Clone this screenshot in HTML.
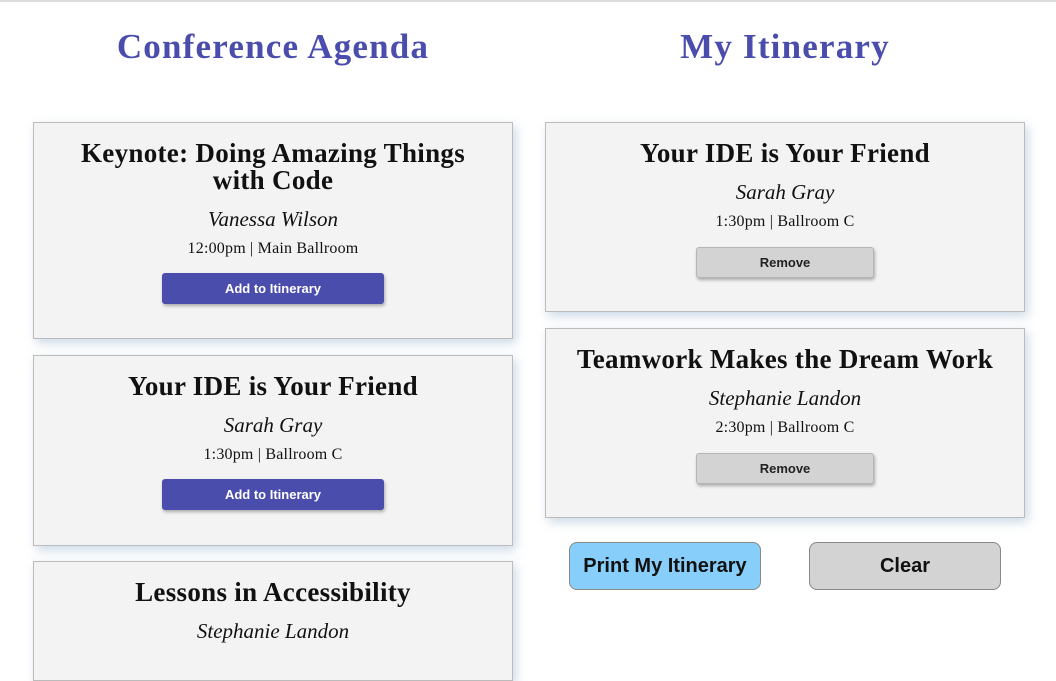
<!DOCTYPE html>
<html><head><meta charset="utf-8"><style>
*{margin:0;padding:0;box-sizing:border-box}
body{width:1056px;height:640px;background:#fff;position:relative;overflow:hidden;font-family:"Liberation Serif",serif}
.topline{position:absolute;left:0;top:0;width:1056px;height:2px;background:#ddd}
h1{position:absolute;top:27px;width:480px;text-align:center;font-size:35px;color:#4b4dad;font-weight:bold;letter-spacing:1.2px}
.card{position:absolute;width:480px;background:#f3f3f3;border:1px solid #bbb;box-shadow:3px 4px 10px rgba(140,170,200,.45);text-align:center;color:#111}
.t{font-size:27px;font-weight:bold;line-height:27px;margin-top:17px;letter-spacing:.3px;padding:0 8px}
.s{font-style:italic;font-size:21px;margin-top:13px;line-height:24px}
.w{font-size:16px;margin-top:8px;line-height:20px;letter-spacing:.2px}
.b{display:block;margin:14px auto 0;width:222px;height:31px;border-radius:3px;font:bold 13px "Liberation Sans",sans-serif;line-height:31px;box-shadow:1px 2px 3px rgba(0,0,0,.3)}
.add{background:#4b4dad;color:#fff}
.rem{background:#d3d3d3;color:#222;border:1px solid #b5b5b5;width:178px;line-height:29px;margin-top:15px}
.big{position:absolute;top:542px;width:192px;height:48px;border-radius:8px;border:1px solid #888;font:bold 20px "Liberation Sans",sans-serif;line-height:46px;text-align:center;color:#111}
</style></head><body>
<div class="topline"></div>
<h1 style="left:33px">Conference Agenda</h1>
<h1 style="left:545px">My Itinerary</h1>

<div class="card" style="left:33px;top:122px;height:217px">
<div class="t" style="padding:0 30px">Keynote: Doing Amazing Things with Code</div>
<div class="s">Vanessa Wilson</div>
<div class="w">12:00pm | Main Ballroom</div>
<div class="b add">Add to Itinerary</div>
</div>
<div class="card" style="left:33px;top:355px;height:191px">
<div class="t">Your IDE is Your Friend</div>
<div class="s">Sarah Gray</div>
<div class="w">1:30pm | Ballroom C</div>
<div class="b add">Add to Itinerary</div>
</div>
<div class="card" style="left:33px;top:561px;height:120px">
<div class="t">Lessons in Accessibility</div>
<div class="s">Stephanie Landon</div>
</div>

<div class="card" style="left:545px;top:122px;height:190px">
<div class="t">Your IDE is Your Friend</div>
<div class="s">Sarah Gray</div>
<div class="w">1:30pm | Ballroom C</div>
<div class="b rem">Remove</div>
</div>
<div class="card" style="left:545px;top:328px;height:190px">
<div class="t">Teamwork Makes the Dream Work</div>
<div class="s">Stephanie Landon</div>
<div class="w">2:30pm | Ballroom C</div>
<div class="b rem">Remove</div>
</div>

<div class="big" style="left:569px;background:#87cefa">Print My Itinerary</div>
<div class="big" style="left:809px;background:#d3d3d3">Clear</div>
</body></html>
